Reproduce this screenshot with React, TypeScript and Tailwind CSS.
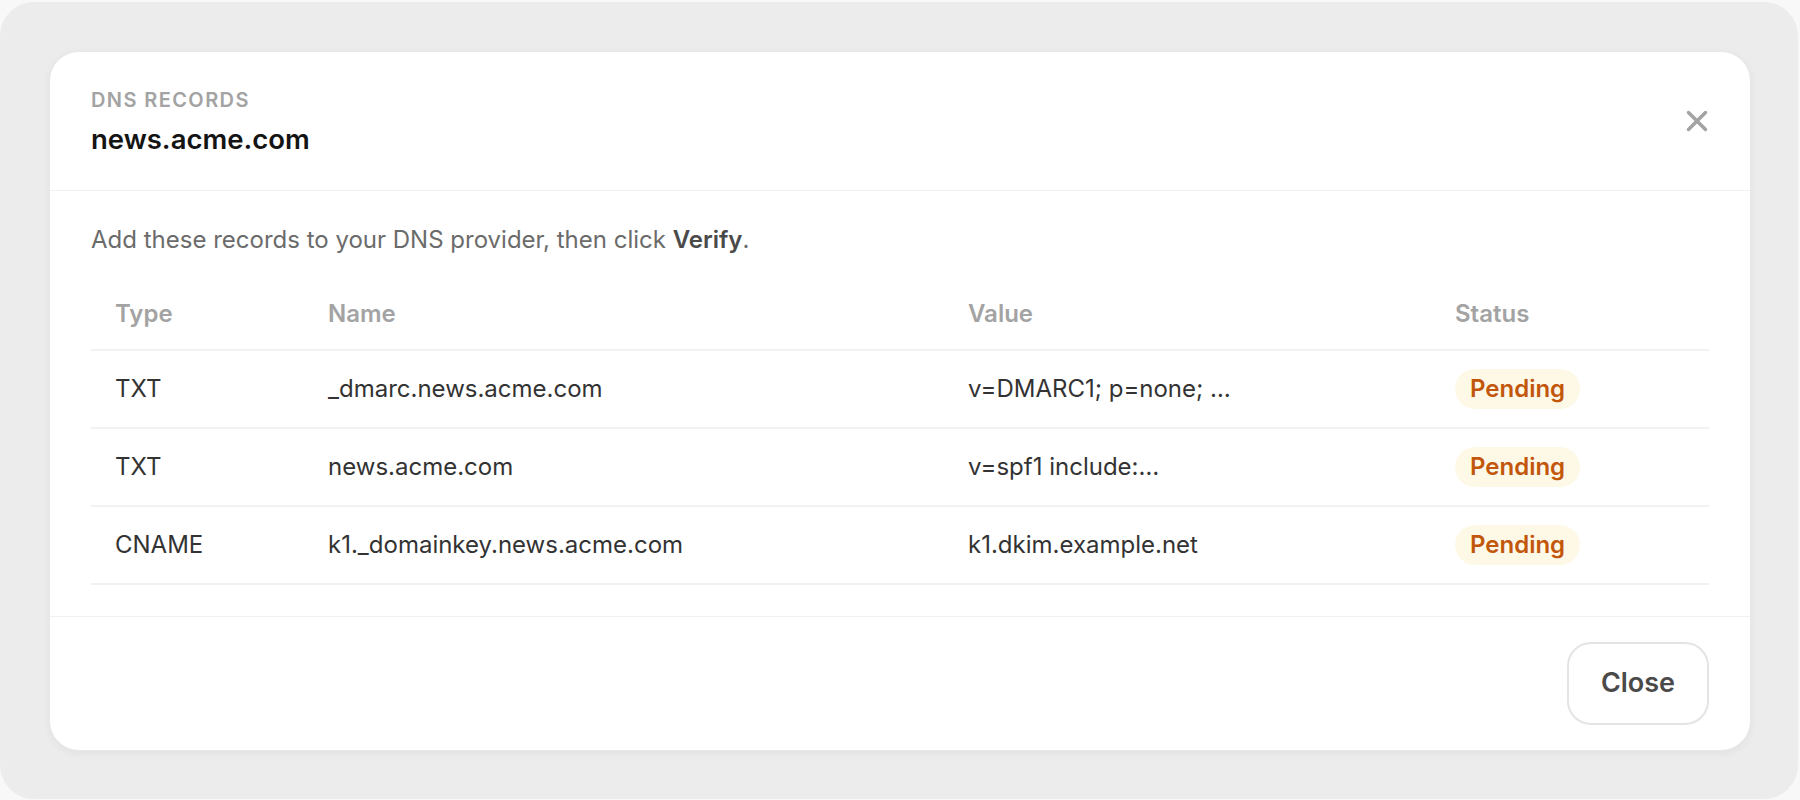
const records = [
  { type: "TXT", name: "_dmarc.news.acme.com", value: "v=DMARC1; p=none; …", status: "Pending" },
  { type: "TXT", name: "news.acme.com", value: "v=spf1 include:…", status: "Pending" },
  { type: "CNAME", name: "k1._domainkey.news.acme.com", value: "k1.dkim.example.net", status: "Pending" },
];

const cols = "grid grid-cols-[213px_640px_487px_1fr] items-center";

export default function App() {
  return (
    <div className="w-full h-[800px] bg-[#f8f8f8] pt-[2px] font-['Inter',sans-serif]">
      <div className="w-[1798px] h-[797px] rounded-[34px] bg-[#ececec] pl-[49px] pt-[49px]">
        {/* Dialog */}
        <div className="w-[1702px] h-[700px] rounded-[30px] bg-white border border-[#e8e8e8] shadow-[0_2px_8px_rgba(0,0,0,0.05)] flex flex-col">
          {/* Header */}
          <div className="flex items-start justify-between px-[41px] pt-[36px] pb-[34px] border-b border-[#f0f0f0]">
            <div>
              <div className="text-[20px] leading-[24px] font-semibold tracking-[0.07em] text-[#a3a3a3]">DNS RECORDS</div>
              <h2 className="mt-[10px] text-[27.5px] leading-[34px] font-semibold text-[#141414]">news.acme.com</h2>
            </div>
            <button className="mt-[22px] mr-[1px] text-[#a3a3a3]">
              <svg width="22" height="22" viewBox="0 0 22 22" fill="none" stroke="currentColor" strokeWidth="3.5" strokeLinecap="round">
                <path d="M2.5 2.5l17 17M19.5 2.5l-17 17" />
              </svg>
            </button>
          </div>

          {/* Body */}
          <div className="px-[41px] pt-[33px] pb-[31px] border-b border-[#f0f0f0]">
            <p className="text-[24px] leading-[32px] text-[#6b6b6b]">
              Add these records to your DNS provider, then click <span className="font-semibold text-[#4a4a4a]">Verify</span>.
            </p>

            <div className="mt-[23px]">
              <div className={`${cols} h-[72px] border-b-2 border-[#f2f2f2] text-[24px] font-semibold text-[#a3a3a3]`}>
                <div className="pl-6">Type</div>
                <div className="pl-6">Name</div>
                <div className="pl-6">Value</div>
                <div className="pl-6">Status</div>
              </div>
              {records.map((r) => (
                <div key={r.name} className={`${cols} h-[78px] border-b-2 border-[#f2f2f2] text-[24px] text-[#333333]`}>
                  <div className="pl-6">{r.type}</div>
                  <div className="pl-6">{r.name}</div>
                  <div className="pl-6">{r.value}</div>
                  <div className="pl-6">
                    <span className="inline-flex items-center h-[40px] px-[15px] rounded-full bg-[#fef9e7] text-[#c2570c] font-semibold">
                      {r.status}
                    </span>
                  </div>
                </div>
              ))}
            </div>
          </div>

          {/* Footer */}
          <div className="flex justify-end px-[41px] pt-[25px]">
            <button className="h-[83px] w-[142px] rounded-[24px] border-2 border-[#e4e4e4] bg-white text-[27px] font-semibold text-[#4a4a4a]">
              Close
            </button>
          </div>
        </div>
      </div>
    </div>
  );
}
